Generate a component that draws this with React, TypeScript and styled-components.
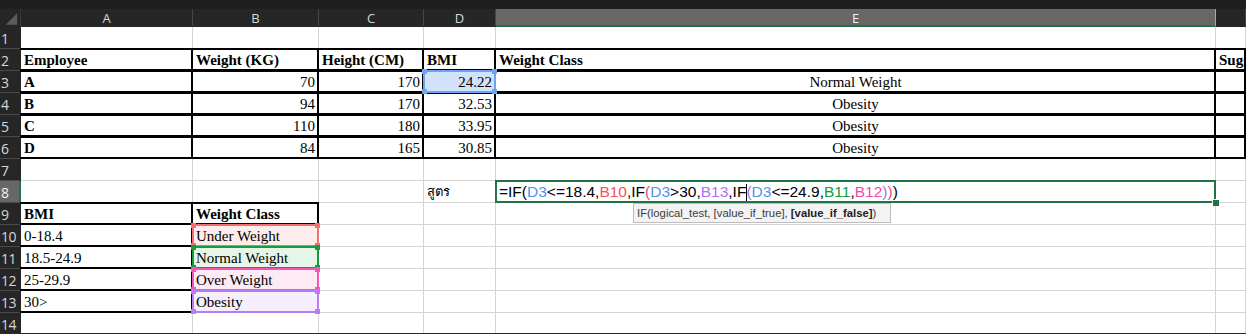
import React from "react";
import styled, { createGlobalStyle, css } from "styled-components";

const GlobalStyle = createGlobalStyle`
    html, body {
        margin: 0;
        padding: 0;
        background: #ffffff;
        overflow: hidden;
    }
    * {
        box-sizing: border-box;
    }
`;

const COL_WIDTHS = [172, 126, 105, 72, 720, 30];
const COLS = ["A", "B", "C", "D", "E", "F"];

const REF = {
    blue: { line: "#6ea3f4", fill: "#d2e2fb" },
    red: { line: "#f46f70", fill: "#fdeded" },
    green: { line: "#169c3c", fill: "#e5f5e8" },
    pink: { line: "#f257b6", fill: "#fdeaf5" },
    purple: { line: "#b77ef1", fill: "#f4eefd" },
};

type RefKey = keyof typeof REF;
type Align = "left" | "right" | "center";

interface CellSpec {
    text?: string;
    align?: Align;
    bold?: boolean;
    edges?: string;
    refColor?: RefKey;
    thai?: boolean;
    editor?: boolean;
}

const Page = styled.div`
    width: 1246px;
    height: 334px;
    display: flex;
    flex-direction: column;
    overflow: hidden;
    border-bottom: 1px solid #2a2a2a;
`;

const TopStrip = styled.div`
    height: 9px;
    flex: none;
    background: #1f1f1f;
`;

const Sheet = styled.div`
    flex: 1;
    display: grid;
    grid-template-columns: 21px ${COL_WIDTHS.map((w) => `${w}px`).join(" ")};
    grid-template-rows: 18px repeat(14, 22px);
    overflow: hidden;
`;

const Corner = styled.div`
    background: #262626;
    border-right: 1px solid #3a3a3a;
    display: flex;
`;

const ColHead = styled.div<{ $selected?: boolean }>`
    background: ${(p) => (p.$selected ? "#676767" : "#262626")};
    border-right: 1px solid ${(p) => (p.$selected ? "#a8a8a8" : "#474747")};
    border-bottom: 2px solid ${(p) => (p.$selected ? "#217346" : "#262626")};
    color: ${(p) => (p.$selected ? "#f2f2f2" : "#d8d8d8")};
    font-family: "Open Sans", "Noto Sans", sans-serif;
    font-size: 13px;
    display: flex;
    align-items: center;
    justify-content: center;
    padding-top: 2px;
`;

const RowHead = styled.div<{ $selected?: boolean }>`
    background: ${(p) => (p.$selected ? "#676767" : "#262626")};
    border-bottom: 1px solid #4a4a4a;
    border-right: 2px solid ${(p) => (p.$selected ? "#217346" : "#262626")};
    color: ${(p) => (p.$selected ? "#f2f2f2" : "#d8d8d8")};
    font-family: "Open Sans", "Noto Sans", sans-serif;
    font-size: 14px;
    letter-spacing: -0.5px;
    display: flex;
    align-items: center;
    padding-left: 1px;
    padding-top: 1px;
`;

const edgeRule = (edges: string, side: string, key: string) =>
    edges.includes(key) ? `border-${side}: 2px solid #000;` : "";

const Cell = styled.div<{ $align: Align; $bold?: boolean; $edges: string; $fill?: string }>`
    position: relative;
    border-right: 1px solid #d4d4d4;
    border-bottom: 1px solid #d4d4d4;
    background: ${(p) => p.$fill ?? "#ffffff"};
    display: flex;
    align-items: flex-end;
    justify-content: ${(p) =>
        p.$align === "right" ? "flex-end" : p.$align === "center" ? "center" : "flex-start"};
    padding: 0 3px 1px 3px;
    font-family: "Liberation Serif", "Times New Roman", serif;
    font-size: 15px;
    line-height: 17px;
    font-weight: ${(p) => (p.$bold ? 700 : 400)};
    color: #000;
    white-space: nowrap;

    ${(p) =>
        p.$edges &&
        css`
            &::after {
                content: "";
                position: absolute;
                top: -1px;
                left: -1px;
                right: -1px;
                bottom: -1px;
                pointer-events: none;
                z-index: 1;
                ${edgeRule(p.$edges, "top", "t")}
                ${edgeRule(p.$edges, "right", "r")}
                ${edgeRule(p.$edges, "bottom", "b")}
                ${edgeRule(p.$edges, "left", "l")}
            }
        `}
`;

const CellText = styled.span`
    position: relative;
    z-index: 3;
`;

const ThaiText = styled.span`
    font-family: "Noto Sans", "DejaVu Sans", sans-serif;
    font-size: 13px;
    margin-bottom: 1px;
`;

const RefBox = styled.div<{ $color: string }>`
    position: absolute;
    top: -1px;
    left: -1px;
    right: -1px;
    bottom: -1px;
    border: 2px solid ${(p) => p.$color};
    z-index: 2;
    pointer-events: none;
`;

const Handle = styled.span<{ $color: string; $pos: "tl" | "tr" | "bl" | "br" }>`
    position: absolute;
    width: 5px;
    height: 5px;
    background: ${(p) => p.$color};
    ${(p) => (p.$pos[0] === "t" ? "top: -3px;" : "bottom: -3px;")}
    ${(p) => (p.$pos[1] === "l" ? "left: -3px;" : "right: -3px;")}
`;

const EditBox = styled.div`
    position: absolute;
    top: -1px;
    left: -1px;
    right: -1px;
    bottom: -1px;
    border: 2px solid #217346;
    z-index: 4;
    pointer-events: none;
`;

const FillHandle = styled.span`
    position: absolute;
    right: -5px;
    bottom: -5px;
    width: 7px;
    height: 7px;
    background: #217346;
    border: 1px solid #ffffff;
    border-right: none;
    border-bottom: none;
`;

const Formula = styled.div`
    position: relative;
    z-index: 5;
    font-family: "Liberation Sans", Arial, sans-serif;
    font-size: 15.5px;
    line-height: 18px;
    display: flex;
    align-items: center;
`;

const Token = styled.span<{ $color: string }>`
    color: ${(p) => p.$color};
`;

const Caret = styled.span`
    display: inline-block;
    width: 1px;
    height: 17px;
    margin-right: -1px;
    background: #000;
`;

const Tooltip = styled.div`
    position: absolute;
    top: 22px;
    left: 137px;
    width: 258px;
    height: 20px;
    z-index: 6;
    background: #f3f3f3;
    border: 1px solid #bdbdbd;
    color: #3c3c3c;
    font-family: "Liberation Sans", Arial, sans-serif;
    font-size: 11.3px;
    line-height: 18px;
    padding-left: 3px;
    white-space: nowrap;

    b {
        font-weight: 700;
        color: #222;
    }
`;

const C = {
    plain: "#000000",
    blue: "#4f92ef",
    red: "#f2515c",
    purple: "#b071f1",
    green: "#139a3a",
    pink: "#f04ba9",
    paren2: "#e8497e",
    paren3: "#9a77e6",
};

const tokens: ([string, string] | "caret")[] = [
    ["=IF(", C.plain],
    ["D3", C.blue],
    ["<=18.4,", C.plain],
    ["B10", C.red],
    [",IF", C.plain],
    ["(", C.paren2],
    ["D3", C.blue],
    [">30,", C.plain],
    ["B13", C.purple],
    [",IF", C.plain],
    "caret",
    ["(", C.paren3],
    ["D3", C.blue],
    ["<=24.9,", C.plain],
    ["B11", C.green],
    [",", C.plain],
    ["B12", C.pink],
    [")", C.paren3],
    [")", C.paren2],
    [")", C.plain],
];

const employees = [
    ["A", "70", "170", "24.22", "Normal Weight"],
    ["B", "94", "170", "32.53", "Obesity"],
    ["C", "110", "180", "33.95", "Obesity"],
    ["D", "84", "165", "30.85", "Obesity"],
];

const classes: [string, string, RefKey][] = [
    ["0-18.4", "Under Weight", "red"],
    ["18.5-24.9", "Normal Weight", "green"],
    ["25-29.9", "Over Weight", "pink"],
    ["30>", "Obesity", "purple"],
];

const rows: CellSpec[][] = [
    [],
    [
        { text: "Employee", bold: true, edges: "tbr" },
        { text: "Weight (KG)", bold: true, edges: "tbr" },
        { text: "Height (CM)", bold: true, edges: "tbr" },
        { text: "BMI", bold: true, edges: "tbr" },
        { text: "Weight Class", bold: true, edges: "tbr" },
        { text: "Suggestion", bold: true, edges: "tbr" },
    ],
    ...employees.map(([name, w, h, bmi, cls], i) => [
        { text: name, bold: true, edges: "tbr" },
        { text: w, align: "right" as Align, edges: "tbr" },
        { text: h, align: "right" as Align, edges: "tbr" },
        { text: bmi, align: "right" as Align, edges: "tbr", refColor: i === 0 ? ("blue" as RefKey) : undefined },
        { text: cls, align: "center" as Align, edges: "tbr" },
        { edges: "tbr" },
    ]),
    [],
    [{}, {}, {}, { text: "สูตร", thai: true }, { editor: true }, {}],
    [
        { text: "BMI", bold: true, edges: "tbr" },
        { text: "Weight Class", bold: true, edges: "tbr" },
    ],
    ...classes.map(([range, cls, color]) => [
        { text: range, edges: "br" },
        { text: cls, edges: "br", refColor: color },
    ]),
    [],
];

const SheetCell: React.FC<{ spec?: CellSpec }> = ({ spec = {} }) => {
    const ref = spec.refColor ? REF[spec.refColor] : undefined;
    return (
        <Cell
            $align={spec.align ?? "left"}
            $bold={spec.bold}
            $edges={spec.edges ?? ""}
            $fill={ref?.fill}
        >
            {ref && (
                <RefBox $color={ref.line}>
                    <Handle $color={ref.line} $pos="tl" />
                    <Handle $color={ref.line} $pos="tr" />
                    <Handle $color={ref.line} $pos="bl" />
                    <Handle $color={ref.line} $pos="br" />
                </RefBox>
            )}
            {spec.thai && <ThaiText>{spec.text}</ThaiText>}
            {!spec.thai && spec.text && <CellText>{spec.text}</CellText>}
            {spec.editor && (
                <>
                    <EditBox>
                        <FillHandle />
                    </EditBox>
                    <Formula>
                        {tokens.map((t, i) =>
                            t === "caret" ? (
                                <Caret key={i} />
                            ) : (
                                <Token key={i} $color={t[1]}>
                                    {t[0]}
                                </Token>
                            )
                        )}
                    </Formula>
                    <Tooltip>
                        IF(logical_test, [value_if_true], <b>[value_if_false]</b>)
                    </Tooltip>
                </>
            )}
        </Cell>
    );
};

export default function App() {
    return (
        <>
            <GlobalStyle />
            <Page>
                <TopStrip />
                <Sheet>
                    <Corner>
                        <svg width="21" height="18" viewBox="0 0 21 18">
                            <polygon points="18,4 18,16 6,16" fill="#5c5c5c" />
                        </svg>
                    </Corner>
                    {COLS.map((c) => (
                        <ColHead key={c} $selected={c === "E"}>
                            {c === "F" ? "" : c}
                        </ColHead>
                    ))}
                    {rows.map((row, r) => (
                        <React.Fragment key={r}>
                            <RowHead $selected={r === 7}>{r + 1}</RowHead>
                            {COLS.map((c, ci) => (
                                <SheetCell key={c} spec={row[ci]} />
                            ))}
                        </React.Fragment>
                    ))}
                </Sheet>
            </Page>
        </>
    );
}
